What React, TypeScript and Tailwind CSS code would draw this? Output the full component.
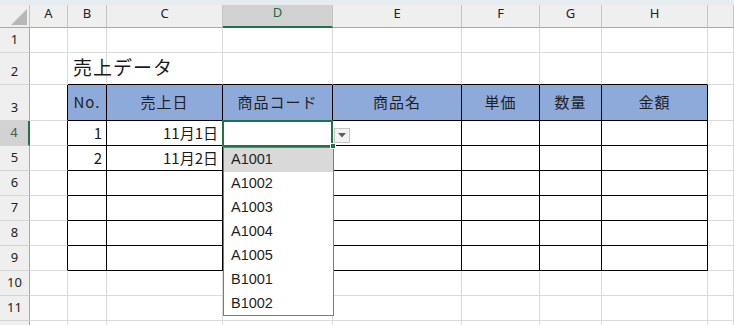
const COLS = ["A", "B", "C", "D", "E", "F", "G", "H", ""];
const ROWS = [1, 2, 3, 4, 5, 6, 7, 8, 9, 10, 11, 12];
const HEADERS = ["No.", "売上日", "商品コード", "商品名", "単価", "数量", "金額"];
const CODES = ["A1001", "A1002", "A1003", "A1004", "A1005", "B1001", "B1002"];

const DATA: Record<number, { no: string; date: string }> = {
  4: { no: "1", date: "11月1日" },
  5: { no: "2", date: "11月2日" },
};

const inTable = (r: number, c: number) => r >= 3 && r <= 9 && c >= 1 && c <= 7;

const jp = "font-['Noto_Sans_CJK_JP','Noto_Sans',sans-serif]";

function ColumnHeader({ label, index }: { label: string; index: number }) {
  const active = index === 3;
  return (
    <div
      className={`flex items-center justify-center pb-[5px] border-r border-r-[#c4c4c4] font-['Noto_Sans',sans-serif] text-[13px] ${
        active
          ? "bg-[#d2d2d2] text-[#1d6b40] border-b-2 border-b-[#217346]"
          : "bg-[#efefef] text-[#222] border-b border-b-[#a9a9a9]"
      }`}
    >
      {label}
    </div>
  );
}

function RowHeader({ n }: { n: number }) {
  const active = n === 4;
  // the last row only peeks in at the bottom edge, so its number stays out of view
  const visible = n <= 11;
  return (
    <div
      className={`flex items-end justify-center pb-[3px] border-b border-b-[#d4d4d4] font-['Noto_Sans',sans-serif] text-[13px] ${
        active
          ? "bg-[#d2d2d2] text-[#3d5f4b] border-r-2 border-r-[#217346]"
          : "bg-[#efefef] text-[#222] border-r border-r-[#a9a9a9]"
      }`}
    >
      {visible ? n : null}
    </div>
  );
}

function CodeDropdown() {
  return (
    <>
      {/* active cell frame and fill handle */}
      <div className="absolute -left-[1px] -top-[1px] w-[111px] h-[27px] border-2 border-[#217346] z-10" />
      <div className="absolute left-[107px] top-[22px] w-[6px] h-[6px] bg-[#217346] border border-white z-20" />

      {/* in-cell list button */}
      <div className="absolute left-[111px] top-[7px] w-[16px] h-[15px] bg-[#f3f3f3] border border-[#c6c6c6] flex items-center justify-center z-10">
        <svg width="8" height="5" viewBox="0 0 8 5">
          <path d="M0 0 H8 L4 4.5 Z" fill="#5f5f5f" />
        </svg>
      </div>

      {/* validation list */}
      <div className="absolute left-0 top-[26px] w-[111px] h-[169px] bg-white border border-[#7b7b7b] z-10 font-['Liberation_Sans',Arial,sans-serif] text-[14.5px] text-[#1f1f1f]">
        {CODES.map((code, i) => (
          <div
            key={code}
            className={`h-[24px] flex items-center pl-[7px] ${i === 0 ? "bg-[#d9d9d9]" : ""}`}
          >
            {code}
          </div>
        ))}
      </div>
    </>
  );
}

function Cell({ r, c }: { r: number; c: number }) {
  const right = inTable(r, c) || inTable(r, c + 1);
  const bottom = inTable(r, c) || inTable(r + 1, c);
  const border = `border-r border-b ${right ? "border-r-black" : "border-r-[#dadada]"} ${
    bottom ? "border-b-black" : "border-b-[#dadada]"
  }`;

  let content: React.ReactNode = null;
  let layout = "flex items-center";
  let extra = "";

  if (r === 2 && c === 1) {
    layout = "flex items-end pl-[5px] pb-[3px]";
    content = (
      <span className={`relative z-[1] whitespace-nowrap text-[19px] tracking-[1px] text-[#1a1a1a] ${jp}`}>
        売上データ
      </span>
    );
  } else if (r === 3 && inTable(r, c)) {
    layout = "flex items-center justify-center";
    extra = "bg-[#8eaadb]";
    content = (
      <span className={`whitespace-nowrap text-[15px] tracking-[1px] text-[#1f1f1f] ${jp}`}>{HEADERS[c - 1]}</span>
    );
  } else if (DATA[r] && (c === 1 || c === 2)) {
    layout = "flex items-center justify-end pr-[4px]";
    content = (
      <span className={`whitespace-nowrap text-[15px] text-[#1a1a1a] ${jp}`}>
        {c === 1 ? DATA[r].no : DATA[r].date}
      </span>
    );
  }

  const active = r === 4 && c === 3;

  return (
    <div className={`${layout} ${border} ${extra} ${active ? "relative" : ""}`}>
      {content}
      {active && <CodeDropdown />}
    </div>
  );
}

export default function App() {
  return (
    <div className="w-[734px] h-[325px] overflow-hidden bg-white">
      <div className="h-[5px] bg-[#e7ecf0]" />
      <div className="grid grid-cols-[30px_38px_39px_116px_110px_129px_78px_62px_106px_1fr] grid-rows-[23px_25px_32px_36px_25px_25px_25px_25px_25px_25px_25px_25px_25px] bg-white">
        {/* corner */}
        <div className="bg-[#efefef] border-r border-r-[#c4c4c4] border-b border-b-[#a9a9a9] flex items-end justify-end pr-[2px] pb-[2px]">
          <svg width="16" height="16" viewBox="0 0 16 16">
            <path d="M0 16 L16 16 L16 0 Z" fill="#b7b7b7" />
          </svg>
        </div>
        {COLS.map((label, i) => (
          <ColumnHeader key={`h${i}`} label={label} index={i} />
        ))}

        {ROWS.map((r) => [
          <RowHeader key={`r${r}`} n={r} />,
          ...COLS.map((_, c) => <Cell key={`${r}-${c}`} r={r} c={c} />),
        ])}
      </div>
    </div>
  );
}
